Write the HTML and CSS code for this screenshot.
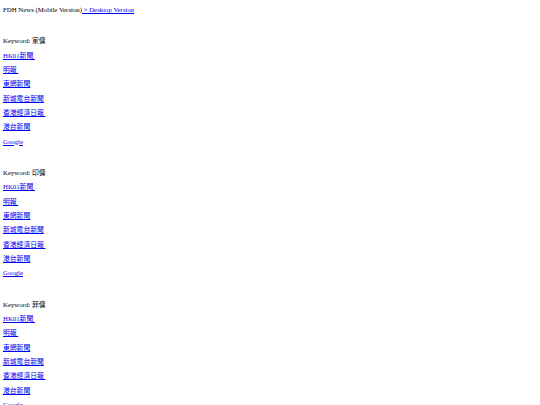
FILE: index.html
```html
<!DOCTYPE html>
<html>
<head>
<meta charset="utf-8">
<link rel="stylesheet" href="styles.css">
</head>
<body>
<div class="header">FDH News (Mobile Version)<a href="#"> &gt; Desktop Version</a></div>
<div class="group">
<div class="row">Keyword: 家傭</div>
<div class="row"><a href="#">HK01新聞 </a></div>
<div class="row"><a href="#">明報 </a></div>
<div class="row"><a href="#">東網新聞</a></div>
<div class="row"><a href="#">新城電台新聞</a></div>
<div class="row"><a href="#">香港經濟日報 </a></div>
<div class="row"><a href="#">港台新聞</a></div>
<div class="row"><a href="#">Google</a></div>
</div>
<div class="group">
<div class="row">Keyword: 印傭</div>
<div class="row"><a href="#">HK01新聞 </a></div>
<div class="row"><a href="#">明報 </a></div>
<div class="row"><a href="#">東網新聞</a></div>
<div class="row"><a href="#">新城電台新聞</a></div>
<div class="row"><a href="#">香港經濟日報 </a></div>
<div class="row"><a href="#">港台新聞</a></div>
<div class="row"><a href="#">Google</a></div>
</div>
<div class="group">
<div class="row">Keyword: 菲傭</div>
<div class="row"><a href="#">HK01新聞 </a></div>
<div class="row"><a href="#">明報 </a></div>
<div class="row"><a href="#">東網新聞</a></div>
<div class="row"><a href="#">新城電台新聞</a></div>
<div class="row"><a href="#">香港經濟日報 </a></div>
<div class="row"><a href="#">港台新聞</a></div>
<div class="row"><a href="#">Google</a></div>
</div>
</body>
</html>
```
FILE: styles.css
```css
body {
  margin: 3px;
  font-family: "Liberation Serif", "Noto Sans CJK TC", serif;
  font-size: 6.8px;
  color: #000;
  background: #fff;
}
a { color: #0000ee; text-decoration: underline; }
.header { line-height: 14.33px; }
.group { margin-top: 17px; }
.row { line-height: 14.33px; white-space: pre; }
```
